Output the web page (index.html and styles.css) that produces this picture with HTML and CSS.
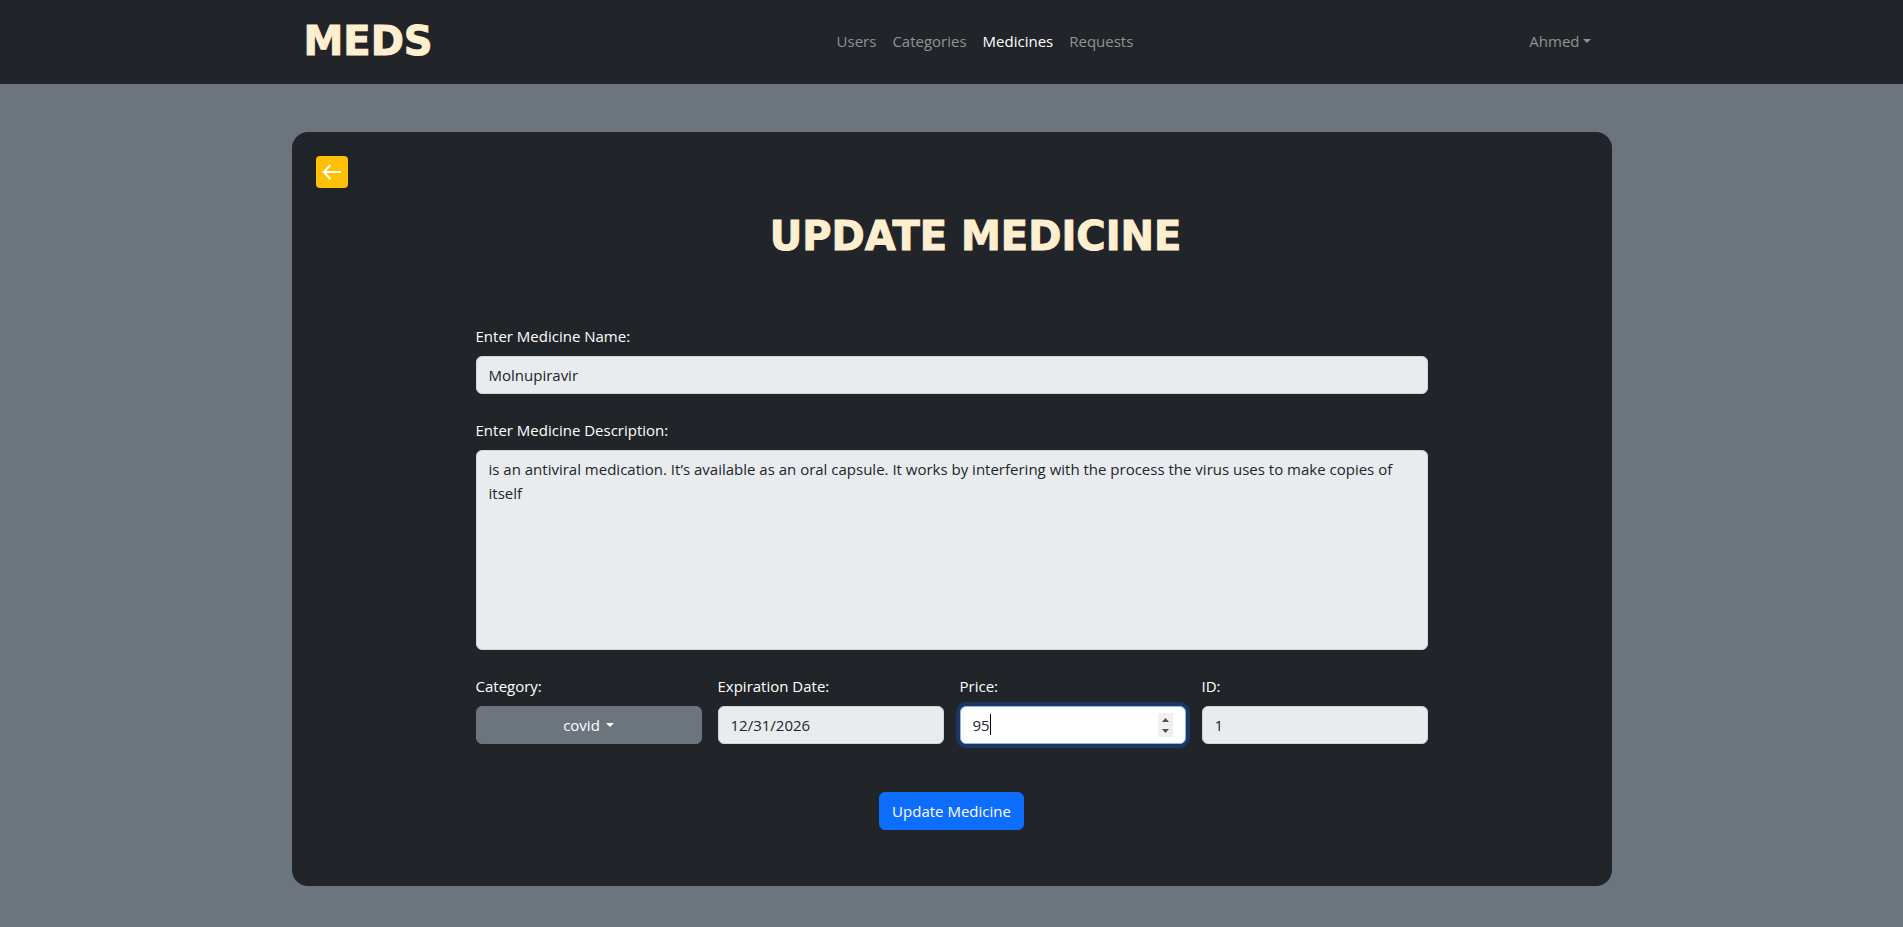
FILE: index.html
```html
<!DOCTYPE html>
<html lang="en">
<head>
<meta charset="utf-8">
<title>Update Medicine</title>
<meta name="viewport" content="width=device-width, initial-scale=1">
<link rel="stylesheet" href="styles.css">
</head>
<body>
<header class="navbar">
  <div class="navbar-inner">
    <a class="brand" href="#">MEDS</a>
    <nav class="nav">
      <a class="nav-link" href="#">Users</a>
      <a class="nav-link" href="#">Categories</a>
      <a class="nav-link active" href="#" aria-current="page">Medicines</a>
      <a class="nav-link" href="#">Requests</a>
    </nav>
    <button class="user-menu" type="button" aria-haspopup="true">Ahmed<span class="caret"></span></button>
  </div>
</header>
<main class="card">
  <div class="card-head">
    <button class="back" type="button" aria-label="Back">
      <svg width="24" height="24" viewBox="0 0 24 24" fill="none" stroke="currentColor" stroke-width="2" aria-hidden="true"><path d="M21 12H4M10.500 5L3.800 12l6.700 7"/></svg>
    </button>
    <h1 class="title">UPDATE MEDICINE</h1>
  </div>
  <form class="form">
    <div class="field">
      <label for="name">Enter Medicine Name:</label>
      <input class="control" id="name" type="text" value="Molnupiravir">
    </div>
    <div class="field">
      <label for="description">Enter Medicine Description:</label>
      <textarea class="control description" id="description">is an antiviral medication. It’s available as an oral capsule. It works by interfering with the process the virus uses to make copies of itself</textarea>
    </div>
    <div class="columns">
      <div class="field">
        <label for="category">Category:</label>
        <div class="overlay-box">
          <select class="control category" id="category"><option>covid</option></select>
          <span class="caret category-caret"></span>
        </div>
      </div>
      <div class="field">
        <label for="expiration">Expiration Date:</label>
        <input class="control" id="expiration" type="text" value="12/31/2026">
      </div>
      <div class="field">
        <label for="price">Price:</label>
        <div class="overlay-box">
          <input class="control price" id="price" type="number" value="95">
          <span class="text-cursor"></span>
          <svg class="spinner" width="15" height="24" viewBox="0 0 15 24" aria-hidden="true"><path fill="#505050" d="M4 9l3.500-4L11 9zM4 16l3.500 4L11 16z"/></svg>
        </div>
      </div>
      <div class="field">
        <label for="id">ID:</label>
        <input class="control" id="id" type="text" value="1">
      </div>
    </div>
    <button class="submit" type="submit">Update Medicine</button>
  </form>
</main>
</body>
</html>
```
FILE: styles.css
```css
* { box-sizing: border-box; }

body {
  margin: 0;
  background: #6c757d;
  color: #fff;
  font-family: "Open Sans", "Noto Sans", sans-serif;
  font-size: 15px;
  line-height: 24px;
}

button, input, select, textarea { font: inherit; }

.navbar { background: #212529; padding: 11px 12px 13px; }

.navbar-inner {
  display: flex;
  align-items: center;
  justify-content: space-between;
  max-width: 1320px;
  margin: 0 auto;
  padding: 0 12px;
}

.brand, .title {
  color: #ffefd0;
  font-family: "DejaVu Sans", sans-serif;
  font-size: 40px;
  font-weight: 700;
  -webkit-text-stroke: 1px #ffefd0;
}

.brand { margin-right: 16px; line-height: 60px; text-decoration: none; }

.nav { display: flex; }

.nav-link { padding: 8px; color: #909294; text-decoration: none; }
.nav-link.active { color: #fff; }

.user-menu {
  display: flex;
  align-items: center;
  gap: 4px;
  padding: 8px;
  border: 0;
  background: none;
  color: #909294;
}

.caret {
  border-top: 4px solid;
  border-left: 4px solid transparent;
  border-right: 4px solid transparent;
}

.card {
  max-width: 1320px;
  margin: 48px auto 0;
  padding: 24px 24px 56px;
  border-radius: 16px;
  background: #212529;
}

.card-head { display: flex; align-items: flex-start; gap: 16px; }

.back {
  display: grid;
  place-items: center;
  width: 32px;
  height: 32px;
  padding: 0;
  border: 0;
  border-radius: 4px;
  background: #ffc107;
  color: #fff;
}

.title { flex: 1; margin: 56px 0 64px; line-height: 48px; text-align: center; }

.form {
  display: flex;
  flex-direction: column;
  gap: 24px;
  margin: 0 160px;
}

.field { display: flex; flex-direction: column; gap: 8px; min-width: 0; }

.control {
  display: block;
  width: 100%;
  height: 38px;
  margin: 0;
  padding: 6px 12px;
  border: 1px solid #ced4da;
  border-radius: 6px;
  background: #e9ecef;
  color: #212529;
  outline: 0;
}

.description { height: 200px; resize: none; }

.columns { display: grid; grid-template-columns: repeat(4, 1fr); gap: 16px; }

.overlay-box { position: relative; }

.category {
  appearance: none;
  padding-right: 26px;
  border-color: #6c757d;
  background: #6c757d;
  color: #fff;
  text-align: center;
  text-align-last: center;
}

.category-caret { position: absolute; top: 17px; left: calc(50% + 17px); pointer-events: none; }

.price {
  border-color: #86b7fe;
  background: #fff;
  box-shadow: 0 0 0 4px #1c3760;
}

.spinner {
  position: absolute;
  top: 7px;
  right: 13px;
  background: #f0f0f0;
  pointer-events: none;
}

.text-cursor {
  position: absolute;
  top: 8px;
  left: 30px;
  width: 1px;
  height: 21px;
  background: #000;
}

.submit {
  align-self: center;
  margin-top: 24px;
  padding: 6px 12px;
  border: 1px solid #0d6efd;
  border-radius: 6px;
  background: #0d6efd;
  color: #fff;
}
```
